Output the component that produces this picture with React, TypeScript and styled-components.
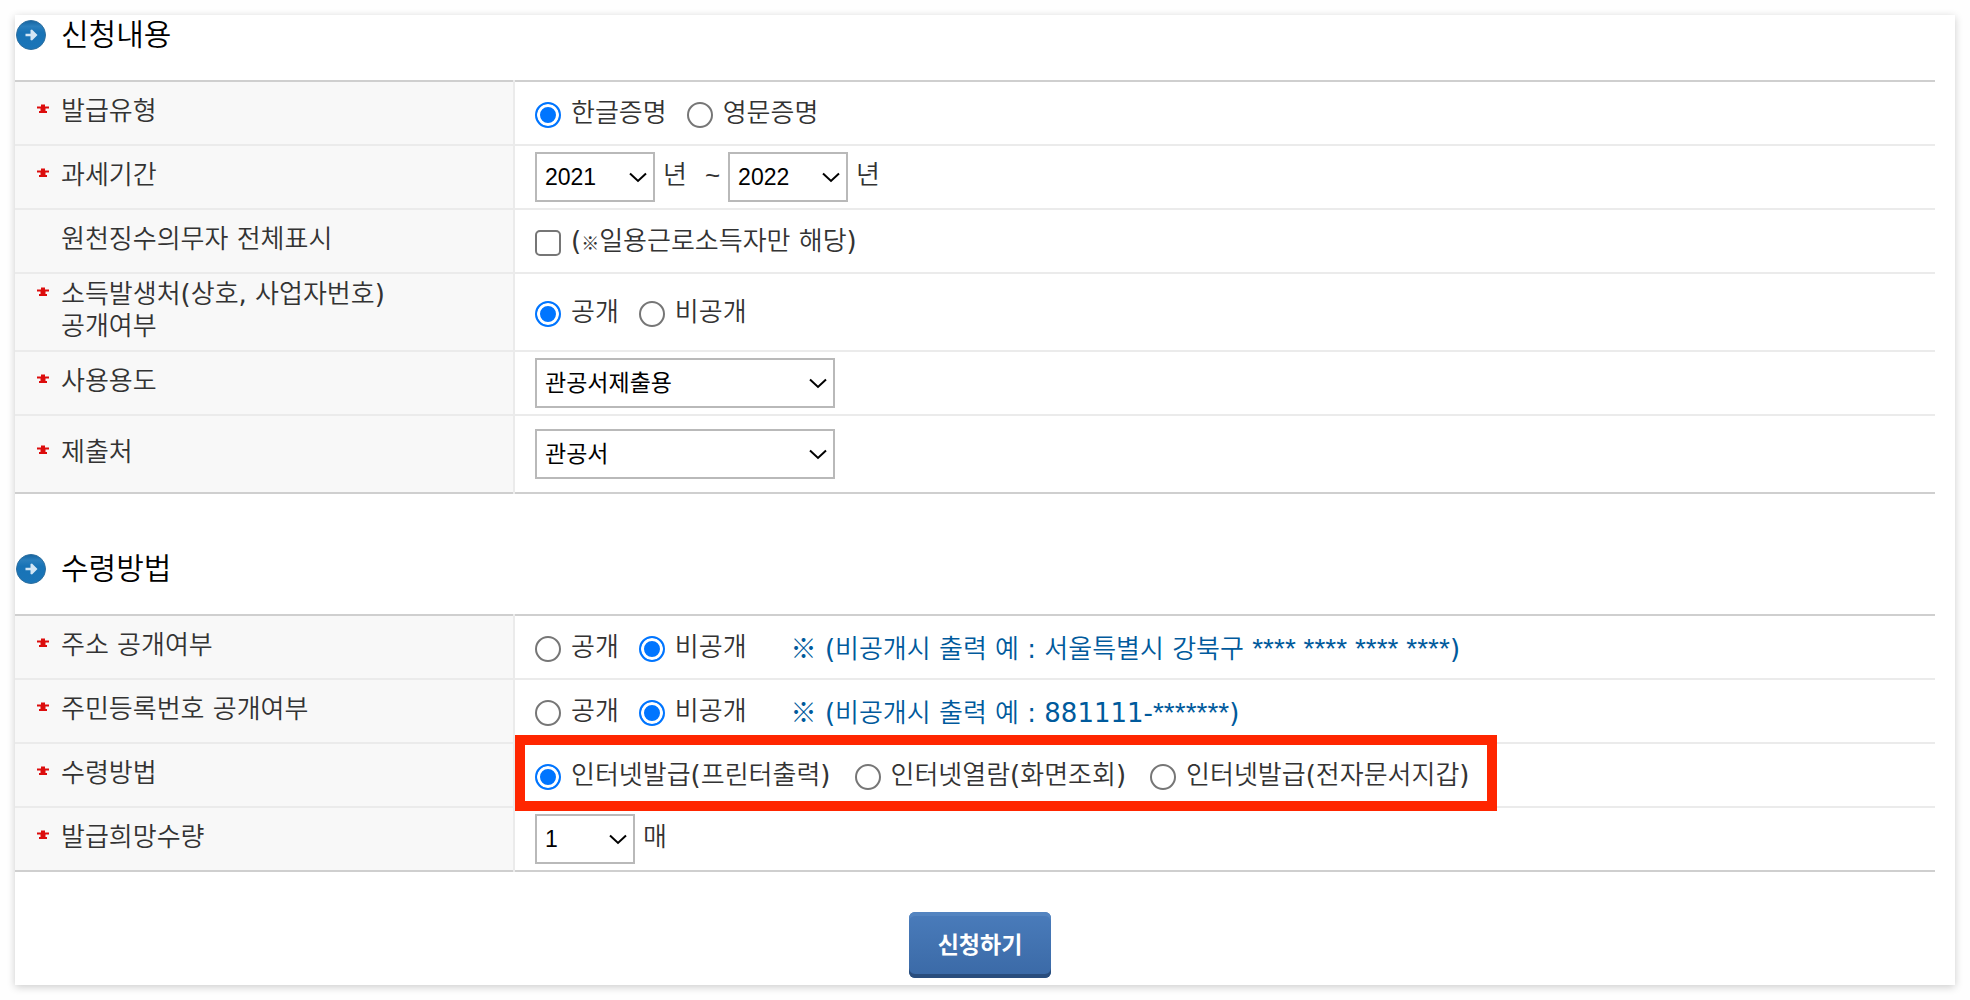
import React, { useState } from "react";
import styled, { createGlobalStyle, css } from "styled-components";

const GlobalStyle = createGlobalStyle`
  *, *::before, *::after { box-sizing: border-box; }
  body {
    margin: 0;
    background: #fefefe;
    color: #333;
    font-family: "DejaVu Sans", "Noto Sans CJK KR DemiLight", "Noto Sans CJK KR", sans-serif;
    font-size: 26px;
    line-height: 32px;
  }
`;

const Panel = styled.form`
  margin: 15px;
  padding: 5px 20px 7px 0;
  background: #fff;
  box-shadow: 0 2px 8px rgba(0, 0, 0, 0.2);
`;

const Section = styled.section`
  & + & {
    margin-top: 60px;
  }
`;

const Heading = styled.h2`
  display: flex;
  align-items: center;
  gap: 15px;
  height: 30px;
  margin: 0 0 30px;
  padding-left: 1px;
  color: #000;
  font-size: 30px;
  font-weight: 400;
`;

const FormTable = styled.table`
  width: 100%;
  table-layout: fixed;
  border-collapse: separate;
  border-spacing: 0;
  border-top: 2px solid #cfcfcf;
  border-bottom: 2px solid #cfcfcf;
`;

const Row = styled.tr<{ $tall?: boolean }>`
  height: ${(p) => (p.$tall ? 78 : 64)}px;

  & > * {
    border-bottom: 2px solid #ebebeb;
  }
  &:last-child {
    height: ${(p) => (p.$tall ? 76 : 62)}px;
  }
  &:last-child > * {
    border-bottom: 0;
  }
`;

const LabelCell = styled.th`
  position: relative;
  width: 500px;
  padding: 0 20px 4px 22px;
  background: #f8f8f8;
  font-weight: 400;
  text-align: left;
  vertical-align: middle;

  &::after {
    content: "";
    position: absolute;
    top: -2px;
    right: 0;
    bottom: -2px;
    width: 2px;
    background: #ebebeb;
  }
`;

const LabelBody = styled.div`
  display: grid;
  grid-template-columns: 12px 1fr;
  gap: 12px;
`;

const MarkSlot = styled.span`
  display: flex;
  align-items: center;
  height: 28px;
`;

const ValueCell = styled.td`
  position: relative;
  padding: 0 0 0 20px;
  vertical-align: middle;
`;

const Options = styled.div<{ $wide?: boolean }>`
  display: flex;
  align-items: center;
  gap: ${(p) => (p.$wide ? 24 : 20)}px;
`;

const Option = styled.label`
  display: flex;
  align-items: center;
  gap: 10px;
  padding-top: 4px;
`;

const OptionText = styled.span`
  padding-bottom: 4px;
`;

const control = css`
  appearance: none;
  flex: none;
  width: 26px;
  height: 26px;
  margin: 0;
  border: 2px solid #767676;
  background: #fff;
`;

const Radio = styled.input`
  ${control}
  border-radius: 50%;

  &:checked {
    border-color: #0075ff;
    background: #0075ff;
    box-shadow: inset 0 0 0 3px #fff;
  }
`;

const Checkbox = styled.input`
  ${control}
  border-radius: 5px;

  &:checked {
    border-color: #0075ff;
    background: #0075ff;
  }
`;

const Note = styled.span`
  padding: 4px 0 0 24px;
  color: #005a9c;
`;

const ReferenceMark = styled.span<{ $small?: boolean }>`
  font-family: "Noto Sans CJK KR", sans-serif;
  font-size: ${(p) => (p.$small ? 18 : 26)}px;
  font-weight: 300;
  line-height: 1;
`;

const Masked = styled.span`
  font-family: "Liberation Sans", sans-serif;
  font-size: 28px;
  line-height: 1;
`;

const Fields = styled.div`
  display: flex;
  align-items: center;
  gap: 8px;
`;

const Unit = styled.span`
  padding-bottom: 4px;
`;

const Tilde = styled(Unit)`
  padding-left: 10px;
  font-family: "Liberation Sans", sans-serif;
`;

const SelectBox = styled.span<{ $width: number }>`
  position: relative;
  display: block;
  width: ${(p) => p.$width}px;
`;

const Select = styled.select`
  appearance: none;
  display: block;
  width: 100%;
  height: 50px;
  padding: 0 30px 0 8px;
  border: 2px solid #b9b9b9;
  border-radius: 0;
  background: #fff;
  color: #000;
  font-family: "Liberation Sans", "Noto Sans CJK KR", sans-serif;
  font-size: 23px;
`;

const Chevron = styled.svg`
  position: absolute;
  top: 20px;
  right: 8px;
  pointer-events: none;
`;

const Highlight = styled.span`
  position: absolute;
  top: -9px;
  left: 0;
  z-index: 1;
  width: 982px;
  height: 76px;
  border: 10px solid #ff2600;
  pointer-events: none;
`;

const Actions = styled.div`
  display: flex;
  justify-content: center;
  margin: 40px 0 0 10px;
`;

const Submit = styled.button`
  width: 142px;
  height: 66px;
  padding: 0 0 4px;
  border: 0;
  border-radius: 6px;
  background: linear-gradient(#4a7cbb, #3a69a6);
  box-shadow: inset 0 4px 0 #5384c0, inset 0 -4px 0 #294d7d;
  color: #fff;
  font-family: "Noto Sans CJK KR", sans-serif;
  font-size: 23px;
  font-weight: 700;
`;

function ArrowBadge() {
  return (
    <svg width="30" height="30" viewBox="0 0 30 30" aria-hidden="true">
      <defs>
        <linearGradient id="badge" x1="0" y1="0" x2="0" y2="1">
          <stop offset="0" stopColor="#14639f" />
          <stop offset="0.2" stopColor="#2a7fbd" />
          <stop offset="0.4" stopColor="#1873b6" />
          <stop offset="1" stopColor="#1a75b8" />
        </linearGradient>
      </defs>
      <circle cx="15" cy="15" r="14.5" fill="url(#badge)" stroke="#2e6f9f" strokeWidth="1" />
      <path d="M9.500 13.700h5V10l1.500-.500L21.500 15 16 20.500l-1.500-.500v-3.700h-5z" fill="#d3e6f5" />
    </svg>
  );
}

function RequiredMark() {
  return (
    <svg width="12" height="10" viewBox="0 0 12 10" role="img" aria-label="필수">
      <path d="M4 0.500h4v2h4v2H8.500v2.500H10v2H2V7h1.500V4.500H0v-2h4z" fill="#dc0d0d" />
    </svg>
  );
}

function FieldRow(props: { label: React.ReactNode; required?: boolean; tall?: boolean; children: React.ReactNode }) {
  const { label, required = true, tall, children } = props;
  return (
    <Row $tall={tall}>
      <LabelCell scope="row">
        <LabelBody>
          <MarkSlot>{required && <RequiredMark />}</MarkSlot>
          <span>{label}</span>
        </LabelBody>
      </LabelCell>
      <ValueCell>{children}</ValueCell>
    </Row>
  );
}

function RadioOptions(props: { name: string; options: string[]; initial: number; wide?: boolean; children?: React.ReactNode }) {
  const [selected, setSelected] = useState(props.initial);
  return (
    <Options $wide={props.wide}>
      {props.options.map((text, i) => (
        <Option key={text}>
          <Radio type="radio" name={props.name} checked={selected === i} onChange={() => setSelected(i)} />
          <OptionText>{text}</OptionText>
        </Option>
      ))}
      {props.children}
    </Options>
  );
}

function Dropdown(props: { label: string; width: number; options: string[]; initial: string }) {
  return (
    <SelectBox $width={props.width}>
      <Select aria-label={props.label} defaultValue={props.initial}>
        {props.options.map((o) => (
          <option key={o}>{o}</option>
        ))}
      </Select>
      <Chevron width="18" height="11" viewBox="0 0 18 11" aria-hidden="true">
        <path d="M1 1.500l8 7.500 8-7.500" fill="none" stroke="#000" strokeWidth="2" />
      </Chevron>
    </SelectBox>
  );
}

const YEARS = ["2020", "2021", "2022"];

export default function App() {
  return (
    <>
      <GlobalStyle />
      <Panel onSubmit={(e) => e.preventDefault()}>
        <Section>
          <Heading>
            <ArrowBadge />
            <span>신청내용</span>
          </Heading>
          <FormTable>
            <tbody>
              <FieldRow label="발급유형">
                <RadioOptions name="type" options={["한글증명", "영문증명"]} initial={0} />
              </FieldRow>
              <FieldRow label="과세기간">
                <Fields>
                  <Dropdown label="시작 연도" width={120} options={YEARS} initial="2021" />
                  <Unit>년</Unit>
                  <Tilde>~</Tilde>
                  <Dropdown label="종료 연도" width={120} options={YEARS} initial="2022" />
                  <Unit>년</Unit>
                </Fields>
              </FieldRow>
              <FieldRow label="원천징수의무자 전체표시" required={false}>
                <Option>
                  <Checkbox type="checkbox" />
                  <OptionText>
                    (<ReferenceMark $small>※</ReferenceMark>일용근로소득자만 해당)
                  </OptionText>
                </Option>
              </FieldRow>
              <FieldRow label={<>소득발생처(상호, 사업자번호)<br />공개여부</>} tall>
                <RadioOptions name="source" options={["공개", "비공개"]} initial={0} />
              </FieldRow>
              <FieldRow label="사용용도">
                <Dropdown label="사용용도" width={300} options={["관공서제출용"]} initial="관공서제출용" />
              </FieldRow>
              <FieldRow label="제출처" tall>
                <Dropdown label="제출처" width={300} options={["관공서"]} initial="관공서" />
              </FieldRow>
            </tbody>
          </FormTable>
        </Section>
        <Section>
          <Heading>
            <ArrowBadge />
            <span>수령방법</span>
          </Heading>
          <FormTable>
            <tbody>
              <FieldRow label="주소 공개여부">
                <RadioOptions name="address" options={["공개", "비공개"]} initial={1}>
                  <Note>
                    <ReferenceMark>※</ReferenceMark> (비공개시 출력 예 : 서울특별시 강북구 <Masked>**** **** **** ****</Masked>)
                  </Note>
                </RadioOptions>
              </FieldRow>
              <FieldRow label="주민등록번호 공개여부">
                <RadioOptions name="resident" options={["공개", "비공개"]} initial={1}>
                  <Note>
                    <ReferenceMark>※</ReferenceMark> (비공개시 출력 예 : 881111-<Masked>*******</Masked>)
                  </Note>
                </RadioOptions>
              </FieldRow>
              <FieldRow label="수령방법">
                <RadioOptions
                  name="delivery"
                  options={["인터넷발급(프린터출력)", "인터넷열람(화면조회)", "인터넷발급(전자문서지갑)"]}
                  initial={0}
                  wide
                />
                <Highlight />
              </FieldRow>
              <FieldRow label="발급희망수량">
                <Fields>
                  <Dropdown label="발급희망수량" width={100} options={["1", "2", "3"]} initial="1" />
                  <Unit>매</Unit>
                </Fields>
              </FieldRow>
            </tbody>
          </FormTable>
        </Section>
        <Actions>
          <Submit type="submit">신청하기</Submit>
        </Actions>
      </Panel>
    </>
  );
}
